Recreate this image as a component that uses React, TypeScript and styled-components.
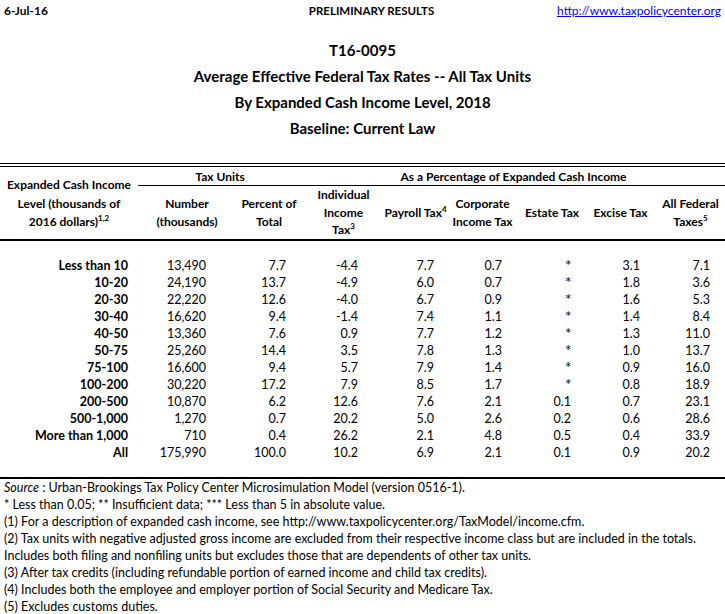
import React from "react";
import styled, { createGlobalStyle } from "styled-components";

const Global = createGlobalStyle`
  html, body { margin: 0; padding: 0; background: #fff; }
  body { font-family: Lato, "Open Sans", "Liberation Sans", sans-serif; color: #000; }
`;

const Page = styled.div`
  width: 725px;
  display: flex;
  flex-direction: column;
`;

const TopBar = styled.div`
  display: grid;
  grid-template-columns: 1fr auto 1fr;
  align-items: center;
  height: 21px;
  padding: 0 4px;
  font-size: 12px;
`;

const TopLeft = styled.span`
  font-weight: 700;
`;
const TopCenter = styled.span`
  font-weight: 700;
  font-size: 11.5px;
  padding-left: 18px;
`;
const TopLink = styled.a`
  justify-self: end;
  color: #0000ee;
  text-decoration: underline;
  font-size: 12px;
`;

const Titles = styled.div`
  display: flex;
  flex-direction: column;
  align-items: center;
  padding-top: 16px;
  padding-bottom: 22px;
`;

const TitleLine = styled.div`
  font-weight: 700;
  font-size: 15px;
  line-height: 26px;
`;

const DoubleRule = styled.div`
  height: 4px;
  border-top: 1px solid #000;
  border-bottom: 1px solid #000;
  box-sizing: border-box;
`;

const cols = "138px 98px 66px 83px 61px 73px 66px 71px 69px";

const Head = styled.div`
  display: grid;
  grid-template-columns: ${cols};
  grid-template-rows: 19px 53px;
  border-bottom: 2px solid #000;
  font-weight: 700;
  font-size: 12px;
`;

const GroupHead = styled.div<{ $start: number; $end: number }>`
  grid-column: ${(p) => p.$start} / ${(p) => p.$end};
  grid-row: 1;
  border-bottom: 1px solid #000;
  display: flex;
  align-items: center;
  justify-content: center;
  padding-top: 1px;
`;

const ColHead = styled.div<{ $col: number; $span?: boolean; $dy?: number }>`
  grid-column: ${(p) => p.$col};
  grid-row: ${(p) => (p.$span ? "1 / 3" : "2")};
  display: flex;
  align-items: center;
  justify-content: center;
  text-align: center;
  white-space: nowrap;
  line-height: ${(p) => (p.$span ? "18.5px" : "17.5px")};
  padding-top: ${(p) => p.$dy ?? 0}px;
`;

const Sup = styled.sup`
  font-size: 8px;
  line-height: 0;
  vertical-align: 5px;
`;

const Body = styled.div`
  display: grid;
  grid-template-columns: ${cols};
  grid-auto-rows: 17px;
  padding-top: 16px;
  padding-bottom: 16px;
  border-bottom: 2px solid #000;
  font-size: 12.5px;
`;

const pads = [10, 30, 16, 27, 12, 17, 14, 16, 15];

const Cell = styled.div<{ $pr: number; $bold?: boolean }>`
  display: flex;
  align-items: center;
  justify-content: flex-end;
  padding-right: ${(p) => p.$pr}px;
  font-weight: ${(p) => (p.$bold ? 700 : 400)};
  white-space: nowrap;
`;

const Star = styled.span`
  font-family: "DejaVu Sans", sans-serif;
  font-size: 11px;
  line-height: 1;
  margin-top: -3px;
`;

const Notes = styled.div`
  display: flex;
  flex-direction: column;
  padding: 0 4px;
  font-size: 12.5px;
  line-height: 17px;
`;

const Note = styled.div`
  white-space: nowrap;
`;

const rows: string[][] = [
  ["Less than 10", "13,490", "7.7", "-4.4", "7.7", "0.7", "*", "3.1", "7.1"],
  ["10-20", "24,190", "13.7", "-4.9", "6.0", "0.7", "*", "1.8", "3.6"],
  ["20-30", "22,220", "12.6", "-4.0", "6.7", "0.9", "*", "1.6", "5.3"],
  ["30-40", "16,620", "9.4", "-1.4", "7.4", "1.1", "*", "1.4", "8.4"],
  ["40-50", "13,360", "7.6", "0.9", "7.7", "1.2", "*", "1.3", "11.0"],
  ["50-75", "25,260", "14.4", "3.5", "7.8", "1.3", "*", "1.0", "13.7"],
  ["75-100", "16,600", "9.4", "5.7", "7.9", "1.4", "*", "0.9", "16.0"],
  ["100-200", "30,220", "17.2", "7.9", "8.5", "1.7", "*", "0.8", "18.9"],
  ["200-500", "10,870", "6.2", "12.6", "7.6", "2.1", "0.1", "0.7", "23.1"],
  ["500-1,000", "1,270", "0.7", "20.2", "5.0", "2.6", "0.2", "0.6", "28.6"],
  ["More than 1,000", "710", "0.4", "26.2", "2.1", "4.8", "0.5", "0.4", "33.9"],
  ["All", "175,990", "100.0", "10.2", "6.9", "2.1", "0.1", "0.9", "20.2"],
];

export default function App() {
  return (
    <Page>
      <Global />
      <TopBar>
        <TopLeft>6-Jul-16</TopLeft>
        <TopCenter>PRELIMINARY RESULTS</TopCenter>
        <TopLink href="#">http://www.taxpolicycenter.org</TopLink>
      </TopBar>
      <Titles>
        <TitleLine>T16-0095</TitleLine>
        <TitleLine>Average Effective Federal Tax Rates -- All Tax Units</TitleLine>
        <TitleLine>By Expanded Cash Income Level, 2018</TitleLine>
        <TitleLine>Baseline: Current Law</TitleLine>
      </Titles>
      <DoubleRule />
      <Head>
        <ColHead $col={1} $span $dy={2}>
          <span>
            Expanded Cash Income
            <br />
            Level (thousands of
            <br />
            2016 dollars)<Sup>1,2</Sup>
          </span>
        </ColHead>
        <GroupHead $start={2} $end={4}>Tax Units</GroupHead>
        <GroupHead $start={4} $end={10}>As a Percentage of Expanded Cash Income</GroupHead>
        <ColHead $col={2}>
          <span>
            Number
            <br />
            (thousands)
          </span>
        </ColHead>
        <ColHead $col={3}>
          <span>
            Percent of
            <br />
            Total
          </span>
        </ColHead>
        <ColHead $col={4}>
          <span>
            Individual
            <br />
            Income
            <br />
            Tax<Sup>3</Sup>
          </span>
        </ColHead>
        <ColHead $col={5}>
          <span>
            Payroll Tax<Sup>4</Sup>
          </span>
        </ColHead>
        <ColHead $col={6}>
          <span>
            Corporate
            <br />
            Income Tax
          </span>
        </ColHead>
        <ColHead $col={7}>Estate Tax</ColHead>
        <ColHead $col={8}>Excise Tax</ColHead>
        <ColHead $col={9}>
          <span>
            All Federal
            <br />
            Taxes<Sup>5</Sup>
          </span>
        </ColHead>
      </Head>
      <Body>
        {rows.map((r, i) =>
          r.map((v, j) => (
            <Cell key={`${i}-${j}`} $pr={pads[j]} $bold={j === 0}>
              {v === "*" ? <Star>*</Star> : v}
            </Cell>
          ))
        )}
      </Body>
      <Notes>
        <Note>
          <i>Source</i> : Urban-Brookings Tax Policy Center Microsimulation Model (version 0516-1).
        </Note>
        <Note>* Less than 0.05; ** Insufficient data; *** Less than 5 in absolute value.</Note>
        <Note>
          (1) For a description of expanded cash income, see http://www.taxpolicycenter.org/TaxModel/income.cfm.
        </Note>
        <Note>
          (2) Tax units with negative adjusted gross income are excluded from their respective income class but are included in the totals.
        </Note>
        <Note>Includes both filing and nonfiling units but excludes those that are dependents of other tax units.</Note>
        <Note>(3) After tax credits (including refundable portion of earned income and child tax credits).</Note>
        <Note>(4) Includes both the employee and employer portion of Social Security and Medicare Tax.</Note>
        <Note>(5) Excludes customs duties.</Note>
      </Notes>
    </Page>
  );
}
